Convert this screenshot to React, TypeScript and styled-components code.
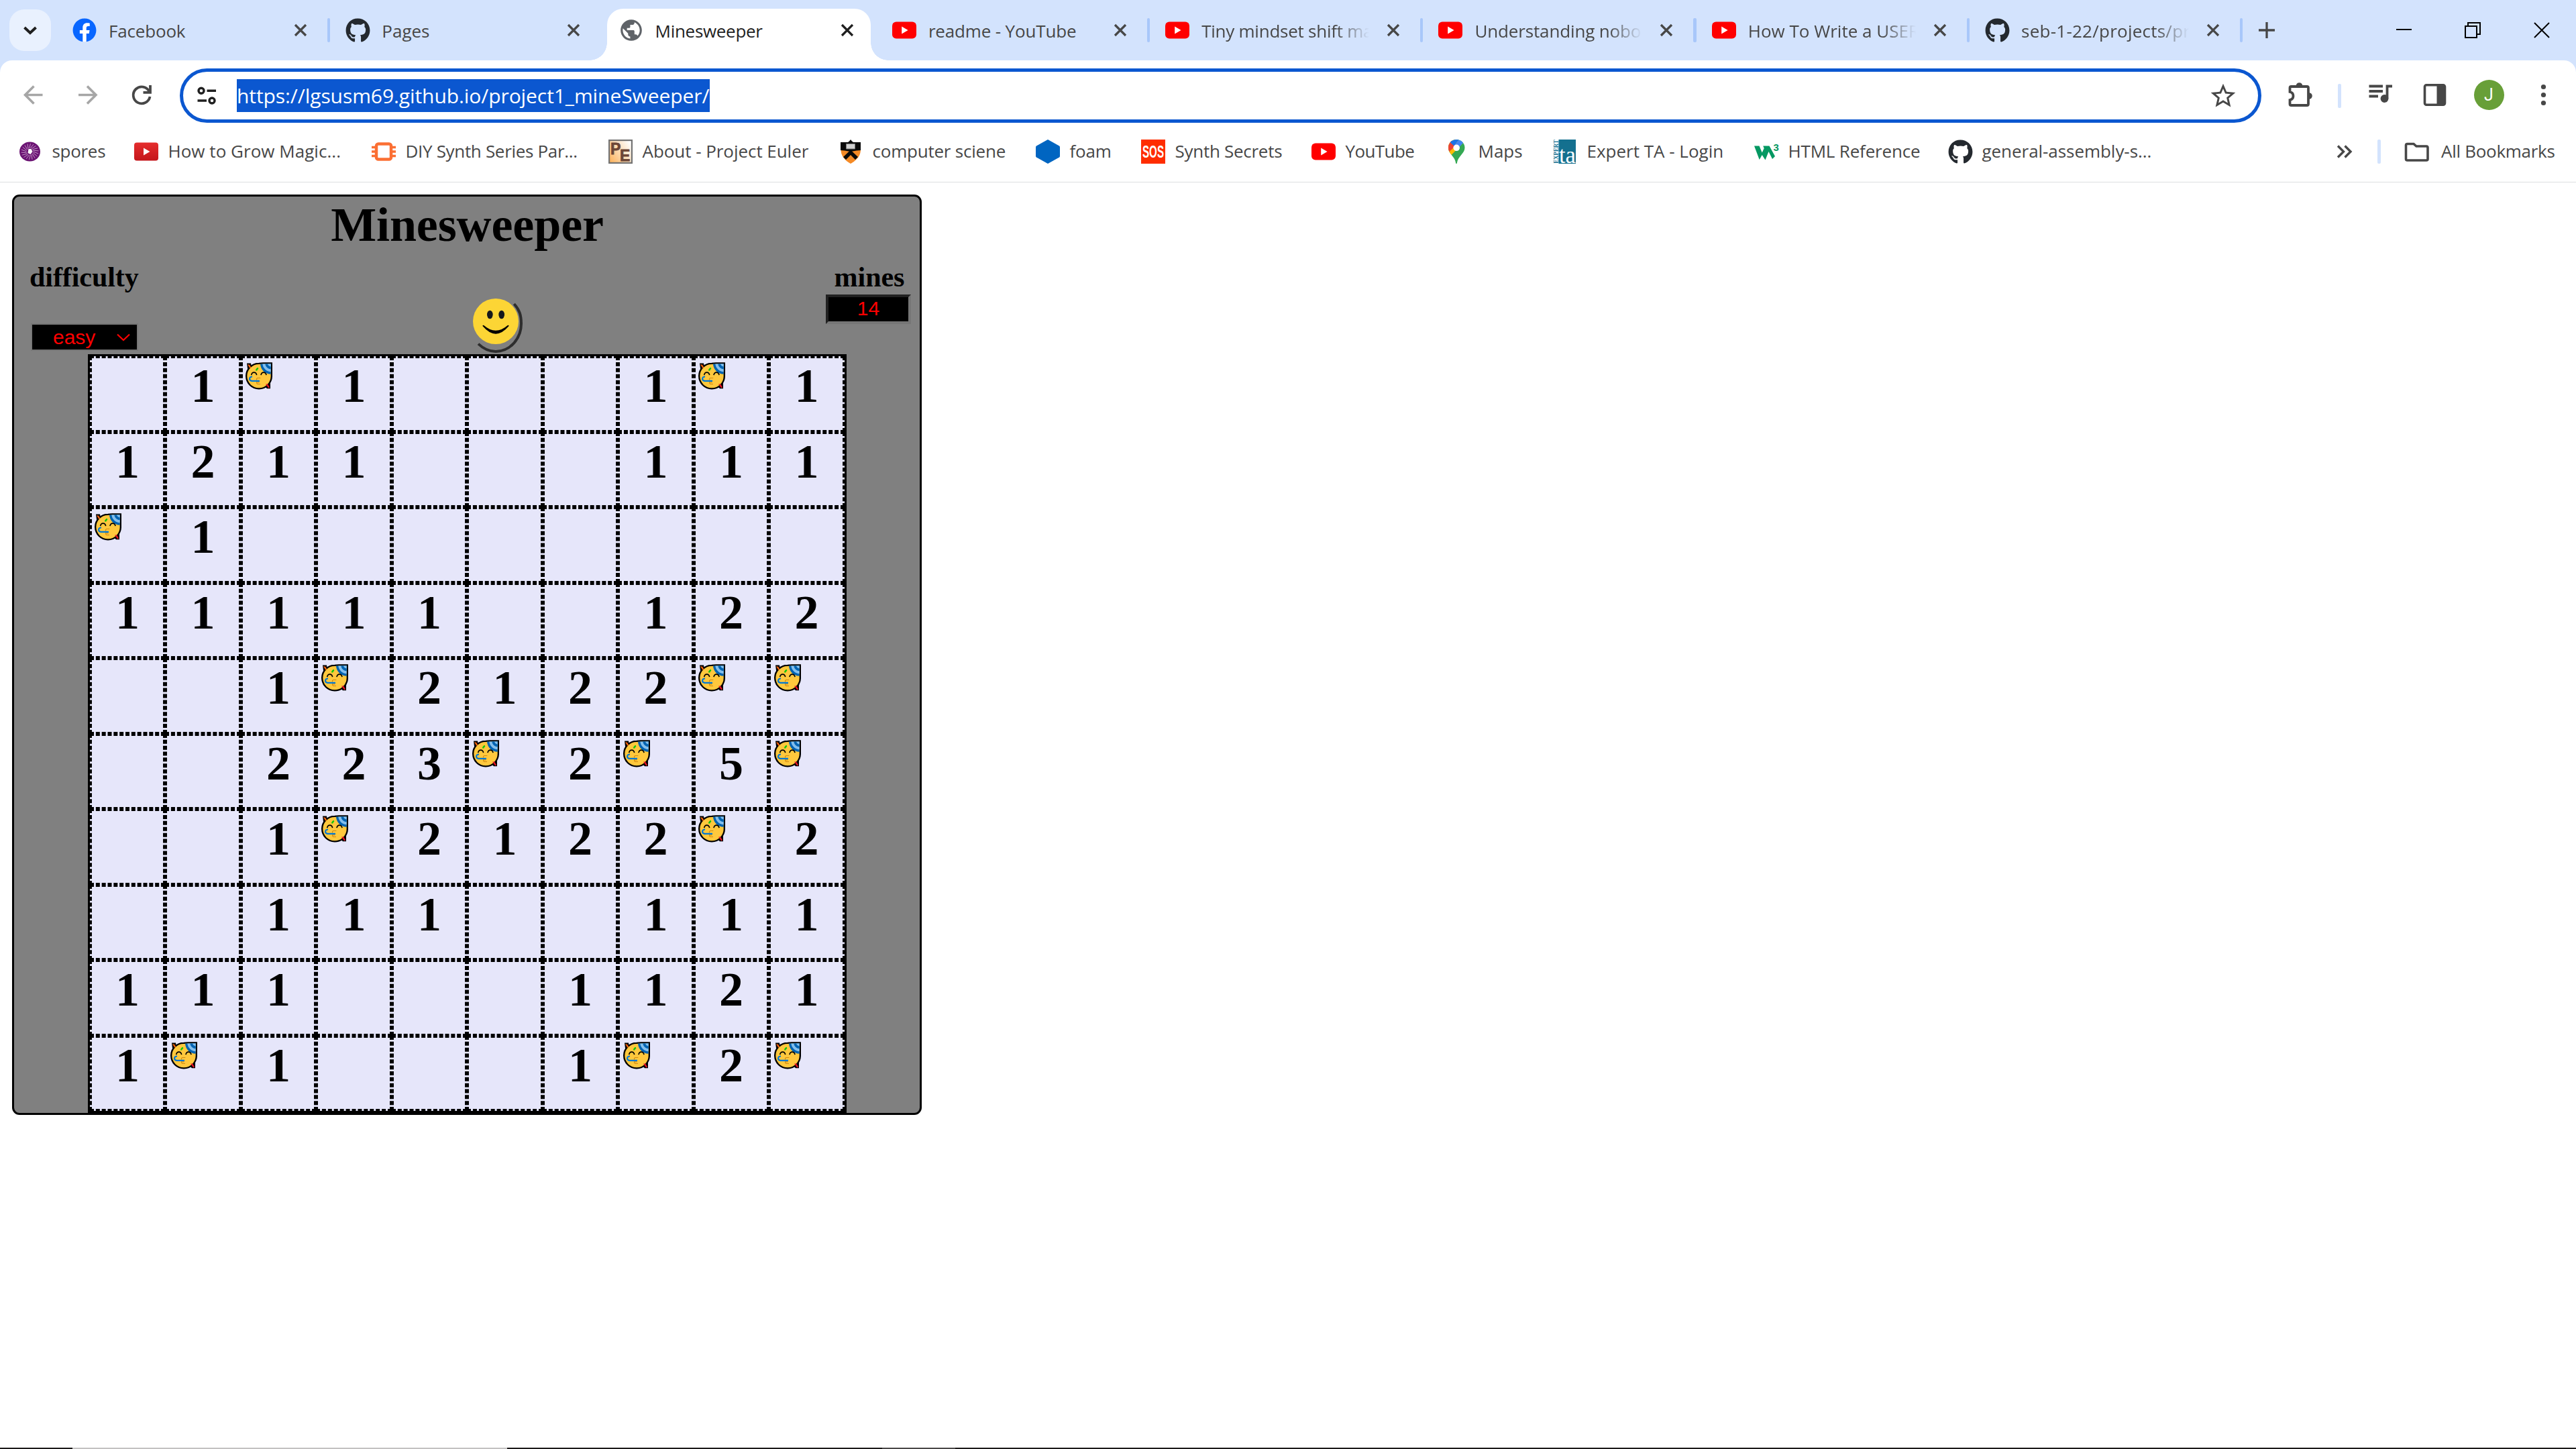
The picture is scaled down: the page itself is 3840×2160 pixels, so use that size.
import React from "react";
import styled, { createGlobalStyle, css } from "styled-components";
import { FaFacebook, FaGithub } from "react-icons/fa";
import { MdPublic, MdStarOutline } from "react-icons/md";

const UI_FONT = '"Open Sans", "Noto Sans", sans-serif';
const SERIF = '"Liberation Serif", "Times New Roman", serif';
const SANS = '"Liberation Sans", Arial, sans-serif';

const GlobalStyle = createGlobalStyle`
  *, *::before, *::after { box-sizing: border-box; }
  html, body { margin: 0; padding: 0; background: #fff; }
  svg { display: block; flex: none; }
`;

const Window = styled.div`
  display: flex;
  flex-direction: column;
  width: 3840px;
  height: 2160px;
  overflow: hidden;
  background: #fff;
  font-family: ${UI_FONT};
`;

/* ---------- tab strip ---------- */

const TabStrip = styled.div`
  display: flex;
  align-items: center;
  height: 90px;
  flex: none;
  background: #d3e3fd;
`;

const TabSearch = styled.div`
  display: flex;
  align-items: center;
  justify-content: center;
  width: 62px;
  height: 62px;
  margin: 0 9px 0 14px;
  border-radius: 22px;
  background: #e9f1fe;
`;

const TabItem = styled.div`
  position: relative;
  display: flex;
  align-items: center;
  flex: none;
  width: 407.3px;
  height: 90px;
  padding-left: 23px;
`;

const ActiveShape = styled.div`
  position: absolute;
  left: 5.5px;
  right: 8.5px;
  top: 13px;
  bottom: 0;
  border-radius: 24px 24px 0 0;
  background: #fff;
  &::before,
  &::after {
    content: "";
    position: absolute;
    bottom: 0;
    width: 26px;
    height: 26px;
  }
  &::before {
    left: -26px;
    background: radial-gradient(circle at 0 0, transparent 25.5px, #fff 26px);
  }
  &::after {
    right: -26px;
    background: radial-gradient(circle at 100% 0, transparent 25.5px, #fff 26px);
  }
`;

const Favicon = styled.div`
  position: relative;
  display: flex;
  align-items: center;
  justify-content: center;
  flex: none;
  width: 36px;
  height: 36px;
`;

const TabLabel = styled.div<{ $ls: number; $active?: boolean; $fade?: boolean }>`
  position: relative;
  width: 252px;
  margin: 2px 0 0 18px;
  overflow: hidden;
  white-space: nowrap;
  font-size: 26px;
  letter-spacing: ${(p) => p.$ls}px;
  color: ${(p) => (p.$active ? "#1f1f1f" : "#474747")};
  ${(p) =>
    p.$fade &&
    css`
      mask-image: linear-gradient(to right, #000 200px, transparent 250px);
    `}
`;

const TabClose = styled.div`
  position: relative;
  margin-left: 24px;
`;

const TabDivider = styled.div<{ $hidden?: boolean }>`
  width: 4.5px;
  height: 36px;
  margin-left: auto;
  border-radius: 2px;
  background: ${(p) => (p.$hidden ? "transparent" : "#a8c7fa")};
`;

const NewTab = styled.div`
  margin-left: 24px;
`;

const WindowControls = styled.div`
  display: flex;
  margin-left: auto;
`;

const WindowButton = styled.div`
  display: flex;
  align-items: center;
  justify-content: center;
  width: 102.5px;
  height: 90px;
`;

const FacebookMark = styled.div`
  display: flex;
  width: 36px;
  height: 36px;
  border-radius: 50%;
  background: radial-gradient(circle, #fff 17px, transparent 17.5px);
  color: #0866ff;
`;

const CloseIcon = ({ color = "#474747" }: { color?: string }) => (
  <svg width="20" height="20" viewBox="0 0 20 20" stroke={color} strokeWidth="3.3" fill="none">
    <path d="M2 2 18 18M18 2 2 18" />
  </svg>
);

const YouTubeIcon = () => (
  <svg width="36" height="36" viewBox="0 0 36 36">
    <rect x="0" y="5.5" width="36" height="25" rx="6" fill="#f00" />
    <path d="M14.2 12.6v10.8l9.4-5.4z" fill="#fff" />
  </svg>
);

const GithubIcon = () => <FaGithub size={37} color="#24292f" />;

type TabData = {
  title: string;
  ls: number;
  icon: React.ReactNode;
  active?: boolean;
  fade?: boolean;
  noDivider?: boolean;
};

const tabs: TabData[] = [
  {
    title: "Facebook",
    ls: -0.18,
    icon: (
      <FacebookMark>
        <FaFacebook size={36} />
      </FacebookMark>
    ),
  },
  { title: "Pages", ls: 0, icon: <GithubIcon />, noDivider: true },
  { title: "Minesweeper", ls: -0.3, icon: <MdPublic size={38} color="#5f6368" />, active: true, noDivider: true },
  { title: "readme - YouTube", ls: -0.16, icon: <YouTubeIcon /> },
  { title: "Tiny mindset shift ma", ls: -0.25, icon: <YouTubeIcon />, fade: true },
  { title: "Understanding nobo", ls: -0.15, icon: <YouTubeIcon />, fade: true },
  { title: "How To Write a USER", ls: 0, icon: <YouTubeIcon />, fade: true },
  { title: "seb-1-22/projects/pr", ls: 0.24, icon: <GithubIcon />, fade: true },
];

const Tab = ({ tab }: { tab: TabData }) => (
  <TabItem>
    {tab.active && <ActiveShape />}
    <Favicon>{tab.icon}</Favicon>
    <TabLabel $ls={tab.ls} $active={tab.active} $fade={tab.fade}>
      {tab.title}
    </TabLabel>
    <TabClose>
      <CloseIcon color={tab.active ? "#1f1f1f" : "#474747"} />
    </TabClose>
    <TabDivider $hidden={tab.noDivider} />
  </TabItem>
);

/* ---------- toolbar ---------- */

const ToolbarBack = styled.div`
  flex: none;
  background: #d3e3fd;
`;

const Toolbar = styled.div`
  display: flex;
  align-items: center;
  height: 105px;
  padding-left: 9px;
  border-radius: 18px 18px 0 0;
  background: #fff;
`;

const ToolButton = styled.div`
  display: flex;
  align-items: center;
  justify-content: center;
  width: 81px;
  height: 81px;
  margin-top: -2px;
  flex: none;
`;

const AddressBar = styled.div`
  display: flex;
  align-items: center;
  width: 3103px;
  height: 81px;
  margin-left: 16px;
  padding: 0 30px 0 21px;
  border: 5px solid #0b57d0;
  border-radius: 41px;
`;

const SelectedUrl = styled.div`
  width: 705px;
  height: 49px;
  margin-left: 31px;
  background: #0b57d0;
  color: #fff;
  font-size: 30px;
  line-height: 50px;
  letter-spacing: -0.08px;
  white-space: nowrap;
`;

const StarSlot = styled.div`
  margin-left: auto;
`;

const PuzzleButton = styled(ToolButton)`
  margin-left: 18px;
`;

const Divider = styled.div<{ $left: number; $right: number }>`
  width: 4.5px;
  height: 36px;
  flex: none;
  margin: 0 ${(p) => p.$right}px 0 ${(p) => p.$left}px;
  border-radius: 2px;
  background: #d3e3fd;
`;

const Avatar = styled.div`
  display: flex;
  align-items: center;
  justify-content: center;
  width: 45px;
  height: 45px;
  border-radius: 50%;
  background: #689f38;
  color: #fff;
  font: 25px Roboto, sans-serif;
`;

/* ---------- bookmarks ---------- */

const BookmarksBar = styled.div`
  display: flex;
  align-items: center;
  flex: none;
  height: 77px;
  padding: 0 0 14px 27px;
  border-bottom: 1px solid #dcdee1;
`;

const BookmarkItem = styled.div<{ $width: number }>`
  display: flex;
  align-items: center;
  flex: none;
  width: ${(p) => p.$width}px;
`;

const BookmarkLabel = styled.div<{ $ls?: number }>`
  margin: -2px 0 0 14.5px;
  font-size: 26px;
  letter-spacing: ${(p) => p.$ls ?? 0}px;
  white-space: nowrap;
  color: #474747;
`;

const AllBookmarks = styled.div`
  display: flex;
  align-items: center;
`;

const Overflow = styled.div`
  width: 61px;
`;

const BarEnd = styled.div`
  display: flex;
  align-items: center;
  flex: none;
  width: 357px;
  margin-left: auto;
`;

const SosIcon = styled.div`
  display: flex;
  align-items: center;
  justify-content: center;
  width: 36px;
  height: 36px;
  background: #ff2d00;
`;

const SporesIcon = () => (
  <svg width="36" height="36" viewBox="0 0 36 36">
    <ellipse cx="17.5" cy="18" rx="15.5" ry="14.5" fill="#6b1373" />
    <g stroke="#c9a0cd" strokeWidth="0.9">
      {Array.from({ length: 18 }, (_, i) => {
        const a = (i * Math.PI) / 9;
        return (
          <line
            key={i}
            x1={17.5 + 5 * Math.cos(a)}
            y1={18 + 5 * Math.sin(a)}
            x2={17.5 + 13 * Math.cos(a + 0.25)}
            y2={18 + 12 * Math.sin(a + 0.25)}
          />
        );
      })}
    </g>
    <path d="M15.5 14l4 0 2 4-3 4-4-2z" fill="#fff" />
  </svg>
);

const OldYouTubeIcon = () => (
  <svg width="36" height="36" viewBox="0 0 36 36">
    <defs>
      <linearGradient id="oldyt" x1="0" y1="0" x2="0" y2="1">
        <stop offset="0" stopColor="#e52d2d" />
        <stop offset="1" stopColor="#c4161b" />
      </linearGradient>
    </defs>
    <rect x="0" y="4.5" width="36" height="27" rx="4" fill="url(#oldyt)" />
    <path d="M14 12.5v11l9.5-5.5z" fill="#fff" />
  </svg>
);

const ChipIcon = () => (
  <svg width="36" height="36" viewBox="0 0 36 36" stroke="#fb6f33" fill="none">
    <rect x="7" y="6.5" width="22" height="23" rx="3" strokeWidth="4.5" />
    <path d="M0 11.5h6M0 18h6M0 24.5h6M30 11.5h6M30 18h6M30 24.5h6" strokeWidth="3.4" />
  </svg>
);

const EulerIcon = () => (
  <svg width="36" height="36" viewBox="0 0 36 36">
    <defs>
      <linearGradient id="pe" x1="0" y1="0.9" x2="1" y2="0.2">
        <stop offset="0" stopColor="#fdb35c" />
        <stop offset="0.4" stopColor="#fcd3a2" />
        <stop offset="1" stopColor="#fff" />
      </linearGradient>
    </defs>
    <rect x="1.1" y="1.1" width="33.8" height="33.8" fill="url(#pe)" stroke="#737373" strokeWidth="2.2" />
    <text x="3" y="22" fontFamily={SANS} fontWeight="700" fontSize="23" fill="#6d4737" stroke="#6d4737" strokeWidth="0.8">
      P
    </text>
    <text x="17" y="31.5" fontFamily={SANS} fontWeight="700" fontSize="23" fill="#6d4737" stroke="#6d4737" strokeWidth="0.8">
      E
    </text>
  </svg>
);

const ShieldIcon = () => (
  <svg width="36" height="36" viewBox="0 0 36 36">
    <path d="M3.5 15H33C33 24 27 31 18 36 9 31 3.5 24 3.5 15z" fill="#f58a25" />
    <path d="M18 0l2 2.5 2 1.5h11v12l-6 .5L18 18l-9-1.5-6-.5V4h11l2-1.5z" fill="#0a0a0a" />
    <path d="M11.5 6.5h13v7.500h-13z" fill="#d0d0d0" stroke="#777" />
    <path d="M18 15.5L29 26l-4 4-7-7-7 7-4-4z" fill="#0a0a0a" />
  </svg>
);

const HexagonIcon = () => (
  <svg width="36" height="36" viewBox="0 0 36 36">
    <path d="M18 0l17 9.5q1 .6 1 2v13q0 1.400-1 2L18 36 1 26.5q-1-.6-1-2v-13q0-1.400 1-2z" fill="#0065c1" />
  </svg>
);

const MapsIcon = () => (
  <svg width="36" height="36" viewBox="0 0 36 36">
    <defs>
      <clipPath id="pin">
        <path d="M18 0C11 0 6 5.5 6 12.3c0 4.200 2 7.200 5 11C14 27 16.3 30 17 34.5c.2 1 .5 1.5 1 1.5s.8-.5 1-1.5c.7-4.500 3-7.500 6-11.200 3-3.800 5.500-6.800 5.500-11C30.5 5.5 25 0 18 0z" />
      </clipPath>
    </defs>
    <g clipPath="url(#pin)">
      <path d="M0 0h36v36H0z" fill="#34a853" />
      <path d="M0 34L28 5 18 0H0z" fill="#fbbc04" />
      <path d="M4 21L18.500 8 8 0 0 6z" fill="#ea4335" />
      <path d="M8.500 4L14.500 9.500 22 0H12z" fill="#1a73e8" />
      <path d="M14.500 9.500L22 0l7 4-11 12z" fill="#4285f4" />
    </g>
    <circle cx="18.2" cy="12.3" r="4.8" fill="#fff" />
  </svg>
);

const ExpertIcon = () => (
  <svg width="36" height="36" viewBox="0 0 36 36">
    <rect x="8.5" y="0" width="25.5" height="36" fill="#14708f" />
    <text
      transform="translate(8 35.5) rotate(-90)"
      fontFamily={SERIF}
      fontWeight="700"
      fontSize="9.5"
      textLength="35"
      lengthAdjust="spacingAndGlyphs"
      fill="#14708f"
    >
      EXPERT
    </text>
    <text x="9" y="35" fontFamily={SERIF} fontSize="35" textLength="25" lengthAdjust="spacingAndGlyphs" fill="#fff">
      ta
    </text>
  </svg>
);

const W3Icon = () => (
  <svg width="37" height="36" viewBox="0 0 37 36">
    <path d="M0 9.5h7.500l4.200 10 3-6.500-1.500-3.500h9.300L31 25l-4 4-5.500-11-5 12.500-4.800-7.500-4 7z" fill="#059862" />
    <text x="28.5" y="16.5" fontFamily={SANS} fontWeight="700" fontSize="15" fill="#059862">
      3
    </text>
  </svg>
);

const bookmarks: { label: string; ls: number; width: number; icon: React.ReactNode }[] = [
  { label: "spores", ls: -0.3, width: 173, icon: <SporesIcon /> },
  { label: "How to Grow Magic...", ls: 0.03, width: 354, icon: <OldYouTubeIcon /> },
  { label: "DIY Synth Series Par...", ls: -0.32, width: 353, icon: <ChipIcon /> },
  { label: "About - Project Euler", ls: -0.05, width: 343, icon: <EulerIcon /> },
  { label: "computer sciene", ls: -0.22, width: 294, icon: <ShieldIcon /> },
  { label: "foam", ls: -0.2, width: 157, icon: <HexagonIcon /> },
  {
    label: "Synth Secrets",
    ls: -0.28,
    width: 254,
    icon: (
      <SosIcon>
        <svg width="34" height="24" viewBox="0 0 34 24">
          <text x="1" y="21" fontFamily={SANS} fontWeight="700" fontSize="26" textLength="32" lengthAdjust="spacingAndGlyphs" fill="#fff">
            SOS
          </text>
        </svg>
      </SosIcon>
    ),
  },
  { label: "YouTube", ls: -0.6, width: 198, icon: <YouTubeIcon /> },
  { label: "Maps", ls: 0, width: 162, icon: <MapsIcon /> },
  { label: "Expert TA - Login", ls: 0, width: 300, icon: <ExpertIcon /> },
  { label: "HTML Reference", ls: -0.18, width: 289, icon: <W3Icon /> },
  { label: "general-assembly-s...", ls: -0.05, width: 330, icon: <GithubIcon /> },
];

/* ---------- game ---------- */

const Page = styled.main`
  flex: 1;
  padding: 18px 0 0 18px;
`;

const Panel = styled.section`
  width: 1356px;
  height: 1372px;
  border: 3px solid #000;
  border-radius: 11px;
  background: #808080;
  font-family: ${SERIF};
  color: #000;
`;

const Title = styled.h1`
  height: 85px;
  margin: 0;
  padding-left: 1px;
  font-size: 72px;
  line-height: 84px;
  letter-spacing: -0.1px;
  text-align: center;
`;

const GameHeader = styled.div`
  display: grid;
  grid-template-columns: 660px 527px 130px;
  height: 150px;
  padding-left: 23px;
`;

const Column = styled.div<{ $center?: boolean }>`
  display: flex;
  flex-direction: column;
  align-items: ${(p) => (p.$center ? "center" : "flex-start")};
  padding-top: 10px;
`;

const Caption = styled.h3`
  height: 48px;
  margin: 0;
  font-size: 42.12px;
  line-height: 49px;
  letter-spacing: -0.1px;
`;

const DifficultySelect = styled.div`
  display: flex;
  align-items: center;
  justify-content: space-between;
  width: 160px;
  height: 41px;
  margin: 46px 0 0 2px;
  padding: 0 10px 0 31px;
  border: 2px solid #767676;
  background: #000;
  color: #f00;
  font: 30px ${SANS};
`;

const MineCounter = styled.div`
  align-self: flex-start;
  width: 127px;
  height: 44px;
  margin-top: 3px;
  border: 4px solid;
  border-color: #212121 #767676 #767676 #212121;
  background: #000;
  color: #f00;
  font: 30px/34px ${SANS};
  text-align: center;
`;

const FaceSlot = styled.div`
  padding-top: 66px;
`;

const Board = styled.div`
  display: grid;
  grid-template-columns: repeat(10, 112.5px);
  grid-auto-rows: 112.5px;
  width: 1131px;
  margin-left: 109.8px;
  border: 3px solid #000;
`;

const Cell = styled.div`
  border: 3px dashed #000;
  background: #e6e6fa;
  font-size: 72px;
  font-weight: 700;
  line-height: 83px;
  text-align: center;
`;

const MineSlot = styled.div`
  padding: 6px 0 0 4.5px;
`;

const SmileyFace = () => (
  <svg width="76" height="83" viewBox="72 42 228 249">
    <circle cx="177" cy="147" r="102" fill="#fcd535" />
    <ellipse cx="151" cy="117" rx="13" ry="19" fill="#15181c" />
    <ellipse cx="203" cy="117" rx="13" ry="19" fill="#15181c" />
    <path d="M119 169Q116 162 124 165Q177 212 230 165Q238 162 235 169Q177 237 119 169z" fill="#000" />
    <path
      d="M259 69C283 95 291 120 291 157C291 225 240 282 177 282C145 282 120 268 99 248"
      fill="none"
      stroke="#2d2d2d"
      strokeWidth="12"
    />
  </svg>
);

const PartyFace = () => (
  <svg width="40" height="41" viewBox="0 0 120 122">
    <path d="M6 4h18l4 22-18 10z" fill="#000" />
    <path d="M92 92l19 0v25H96L84 106z" fill="#000" />
    <path
      d="M60 5Q70 3 84 3.5H116.5V60A56 56 0 0 1 60 117.5 56 56 0 0 1 3.5 62 56 56 0 0 1 60 5z"
      fill="#ffc83d"
      stroke="#000"
      strokeWidth="7"
    />
    <path d="M66 7H113V53C88 52 68 34 66 7z" fill="#0063b1" />
    <path d="M76 7H113V42C94 42 78 27 76 7z" fill="#83beec" />
    <path d="M88 7H113V30C99 29 90 20 88 7z" fill="#0063b1" />
    <path d="M99 7H113V19C106 18 101 14 99 7z" fill="#83beec" />
    <path d="M9 9l9 2 7 12-6 3z" fill="#f7630c" />
    <path d="M90 97l9 0 9 14-5 4z" fill="#e81224" />
    <path d="M48 37Q50 28 57 26" fill="none" stroke="#16c60c" strokeWidth="7" />
    <path d="M26 57Q28 45 38 45T50 57M69 57Q71 45 81 45T93 57" fill="none" stroke="#000" strokeWidth="5" />
    <path d="M67 70H54Q48 71 50 79M50 86Q48 96 56 97H66M52 89H62" fill="none" stroke="#d18b12" strokeWidth="3.5" />
    <path d="M30 64Q19 64 18 73Q18 82 28 83H63" fill="none" stroke="#0078d4" strokeWidth="6.5" />
  </svg>
);

const board = [
  " 1*1   1*1",
  "1211   111",
  "*1        ",
  "11111  122",
  "  1*2122**",
  "  223*2*5*",
  "  1*2122*2",
  "  111  111",
  "111   1121",
  "1*1   1*2*",
];

/* ---------- taskbar sliver ---------- */

const Taskbar = styled.footer`
  display: flex;
  flex: none;
  height: 2px;
  background: #1b1919;
`;

const TaskSegment = styled.div<{ $before: number; $width: number; $color: string }>`
  width: ${(p) => p.$width}px;
  margin-left: ${(p) => p.$before}px;
  background: ${(p) => p.$color};
`;

export default function App() {
  return (
    <Window>
      <GlobalStyle />
      <TabStrip>
        <TabSearch>
          <svg width="24" height="24" viewBox="0 0 24 24" fill="none" stroke="#1f1f1f" strokeWidth="4">
            <path d="M3.5 8l8.500 8 8.500-8" />
          </svg>
        </TabSearch>
        {tabs.map((tab) => (
          <Tab key={tab.title} tab={tab} />
        ))}
        <NewTab>
          <svg width="24" height="24" viewBox="0 0 24 24" stroke="#474747" strokeWidth="3.3">
            <path d="M12 0v24M0 12h24" />
          </svg>
        </NewTab>
        <WindowControls>
          <WindowButton>
            <svg width="24" height="24" viewBox="0 0 24 24" stroke="#000" strokeWidth="2">
              <path d="M0 11h23" />
            </svg>
          </WindowButton>
          <WindowButton>
            <svg width="24" height="24" viewBox="0 0 24 24" fill="none" stroke="#000" strokeWidth="2">
              <path d="M1 6h17v17H1zM5 6V1h18v17h-5" />
            </svg>
          </WindowButton>
          <WindowButton>
            <svg width="24" height="24" viewBox="0 0 24 24" stroke="#000" strokeWidth="2">
              <path d="M1 1l22 22M23 1L1 23" />
            </svg>
          </WindowButton>
        </WindowControls>
      </TabStrip>

      <ToolbarBack>
        <Toolbar>
          <ToolButton>
            <svg width="45" height="45" viewBox="0 0 45 45" fill="none" stroke="#a6a6a6" strokeWidth="3.6">
              <path d="M36.5 22.5H11M23.5 9.5l-13 13 13 13" />
            </svg>
          </ToolButton>
          <ToolButton>
            <svg width="45" height="45" viewBox="0 0 45 45" fill="none" stroke="#a6a6a6" strokeWidth="3.6">
              <path d="M9 22.5h26M22 9.5l13 13-13 13" />
            </svg>
          </ToolButton>
          <ToolButton>
            <svg width="45" height="45" viewBox="0 0 45 45" fill="none" stroke="#474747" strokeWidth="3.8">
              <path d="M33.5 17.5A12.5 12.5 0 1 0 34.5 25" />
              <path d="M35 8v10.800H24.5" />
            </svg>
          </ToolButton>
          <AddressBar>
            <svg width="28" height="27" viewBox="0 0 28 27" fill="none" stroke="#1f1f1f" strokeWidth="3.4">
              <circle cx="6" cy="6.3" r="4" />
              <circle cx="22" cy="21" r="4" />
              <path d="M14.5 6.3H28M.5 21H14" />
            </svg>
            <SelectedUrl>https://lgsusm69.github.io/project1_mineSweeper/</SelectedUrl>
            <StarSlot>
              <MdStarOutline size={44} color="#474747" />
            </StarSlot>
          </AddressBar>
          <PuzzleButton>
            <svg width="45" height="45" viewBox="0 0 45 45">
              <path
                d="M6.5 18V12q0-2 2-2H32q2 0 2 2V36q0 2-2 2H8.5q-2 0-2-2V30Q11.5 29 11.5 24 11.5 19 6.5 18z"
                fill="none"
                stroke="#474747"
                strokeWidth="3.8"
              />
              <path d="M15.700 9a4.800 4.800 0 0 1 9.600 0zM35 19.200a4.800 4.800 0 0 1 0 9.600z" fill="#474747" />
            </svg>
          </PuzzleButton>
          <Divider $left={15} $right={18} />
          <ToolButton>
            <svg width="45" height="45" viewBox="0 0 45 45" stroke="#474747" strokeWidth="3.8">
              <path d="M5.5 9.5H26M5.5 17H26M5.5 24.5H19M32.5 28V9.5H40" fill="none" />
              <circle cx="28.5" cy="28" r="4" fill="#474747" />
            </svg>
          </ToolButton>
          <ToolButton>
            <svg width="45" height="45" viewBox="0 0 45 45">
              <rect x="7.5" y="7.8" width="30" height="29.4" rx="2.5" fill="none" stroke="#474747" strokeWidth="3.6" />
              <path d="M25.5 7h12v31h-12z" fill="#474747" />
            </svg>
          </ToolButton>
          <ToolButton>
            <Avatar>J</Avatar>
          </ToolButton>
          <ToolButton>
            <svg width="45" height="45" viewBox="0 0 45 45" fill="#474747">
              <circle cx="22.5" cy="10.5" r="3.6" />
              <circle cx="22.5" cy="22.5" r="3.6" />
              <circle cx="22.5" cy="34.5" r="3.6" />
            </svg>
          </ToolButton>
        </Toolbar>
      </ToolbarBack>

      <BookmarksBar>
        {bookmarks.map((b) => (
          <BookmarkItem key={b.label} $width={b.width}>
            <Favicon>{b.icon}</Favicon>
            <BookmarkLabel $ls={b.ls}>{b.label}</BookmarkLabel>
          </BookmarkItem>
        ))}
        <BarEnd>
          <Overflow>
            <svg width="24" height="20" viewBox="0 0 24 20" fill="none" stroke="#474747" strokeWidth="3.4">
              <path d="M2 1.5l8.500 8.500L2 18.5M12.5 1.5L21 10l-8.500 8.500" />
            </svg>
          </Overflow>
          <Divider $left={0} $right={31} />
          <AllBookmarks>
            <svg width="45" height="45" viewBox="0 0 45 45" fill="none" stroke="#474747" strokeWidth="3.6">
              <path d="M6.5 12V33q0 2 2 2H37q2 0 2-2V16q0-2-2-2H22l-4-3.500H8.5q-2 0-2 2z" />
            </svg>
            <BookmarkLabel $ls={-0.28}>All Bookmarks</BookmarkLabel>
          </AllBookmarks>
        </BarEnd>
      </BookmarksBar>

      <Page>
        <Panel>
          <Title>Minesweeper</Title>
          <GameHeader>
            <Column>
              <Caption>difficulty</Caption>
              <DifficultySelect>
                easy
                <svg width="20" height="12" viewBox="0 0 20 12" fill="none" stroke="#f00" strokeWidth="2.2">
                  <path d="M1 1.5l9 8.500 9-8.500" />
                </svg>
              </DifficultySelect>
            </Column>
            <FaceSlot>
              <SmileyFace />
            </FaceSlot>
            <Column $center>
              <Caption>mines</Caption>
              <MineCounter>14</MineCounter>
            </Column>
          </GameHeader>
          <Board>
            {board.flatMap((row, r) =>
              row.split("").map((value, c) => (
                <Cell key={`${r}-${c}`}>
                  {value === "*" ? (
                    <MineSlot>
                      <PartyFace />
                    </MineSlot>
                  ) : (
                    value.trim()
                  )}
                </Cell>
              ))
            )}
          </Board>
        </Panel>
      </Page>

      <Taskbar>
        <TaskSegment $before={0} $width={108} $color="#1b1919" />
        <TaskSegment $before={0} $width={648} $color="#c3c1c1" />
        <TaskSegment $before={559} $width={109} $color="#4a4848" />
      </Taskbar>
    </Window>
  );
}
